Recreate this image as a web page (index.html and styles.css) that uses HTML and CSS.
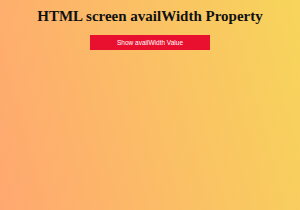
FILE: index.html
```html
<!DOCTYPE html>
<html lang="en">
<head>
  <meta charset="UTF-8">
  <title>screen availWidth</title>
  <link rel="stylesheet" href="styles.css">
</head>
<body>
  <div class="page">
    <h1 class="title">HTML screen availWidth Property</h1>
    <button class="show-btn">Show availWidth Value</button>
  </div>
</body>
</html>
```
FILE: styles.css
```css
html, body {
  height: 100%;
}

body {
  margin: 0;
  font-family: "Liberation Serif", "Times New Roman", serif;
  background: linear-gradient(75deg, #ffa770, #f7d55b);
}

.page {
  display: flex;
  flex-direction: column;
  align-items: center;
  padding-top: 7px;
}

.title {
  margin: 0;
  font-size: 15px;
  line-height: 18px;
  font-weight: bold;
  color: #111;
}

.show-btn {
  margin-top: 10px;
  width: 120px;
  height: 15px;
  padding: 0;
  border: none;
  background-color: #e8102e;
  color: #fff;
  font-family: "Liberation Sans", Arial, sans-serif;
  font-size: 6.5px;
  cursor: pointer;
}
```
